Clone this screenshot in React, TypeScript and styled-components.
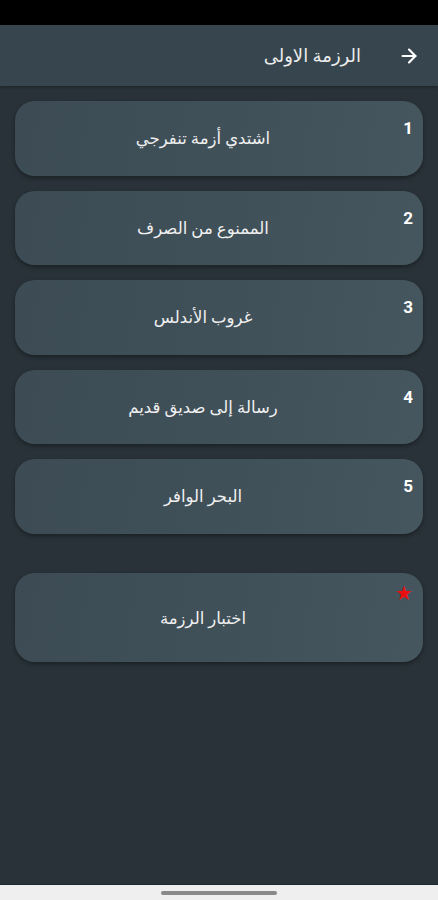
import React from 'react';
import styled, { createGlobalStyle } from 'styled-components';
import { ArrowRight } from 'lucide-react';

const GlobalStyle = createGlobalStyle`
    html, body {
        margin: 0;
        padding: 0;
        background: #283238;
    }
    * {
        box-sizing: border-box;
    }
`;

const Screen = styled.div`
    width: 438px;
    height: 900px;
    display: flex;
    flex-direction: column;
    direction: rtl;
    background: #283238;
    font-family: Roboto, 'DejaVu Sans', sans-serif;
    color: #f2f2f2;
`;

const StatusBar = styled.div`
    height: 25px;
    background: #000;
    flex-shrink: 0;
`;

const Header = styled.div`
    height: 61px;
    background: #37464e;
    display: flex;
    align-items: center;
    gap: 37px;
    padding: 0 18px;
    box-shadow: 0 1px 3px rgba(0, 0, 0, 0.3);
    flex-shrink: 0;
`;

const BackIcon = styled(ArrowRight)`
    color: #fff;
`;

const Title = styled.div`
    font-size: 18px;
    color: #ececec;
`;

const List = styled.div`
    flex: 1;
    display: flex;
    flex-direction: column;
    gap: 15px;
    padding: 15px 15px 0;
`;

const Card = styled.div<{ tall?: boolean }>`
    height: ${({ tall }) => (tall ? '89px' : '74.5px')};
    flex-shrink: 0;
    border-radius: 20px;
    background: linear-gradient(100deg, #3c4b54 0%, #3f4f58 40%, #46565e 100%);
    box-shadow: 0 2px 4px rgba(0, 0, 0, 0.35);
    display: flex;
    align-items: flex-start;
    padding: 17px 10px 0 0;
`;

const Number = styled.div`
    width: 30px;
    font-size: 17px;
    font-weight: bold;
    color: #fff;
    text-align: right;
`;

const Star = styled.div`
    width: 30px;
    margin-top: -9px;
    font-size: 20px;
    color: #e81010;
    text-align: right;
`;

const Label = styled.div<{ tall?: boolean }>`
    flex: 1;
    text-align: center;
    font-size: 16.5px;
    font-weight: 500;
    color: #f0f0f0;
    padding-left: 8px;
    margin-top: ${({ tall }) => (tall ? '19px' : '11px')};
`;

const Spacer = styled.div`
    height: 9px;
    flex-shrink: 0;
`;

const NavBar = styled.div`
    height: 16px;
    background: #efefef;
    display: flex;
    justify-content: center;
    align-items: center;
    flex-shrink: 0;
    border-top: 1px solid #1e2a2e;
`;

const Handle = styled.div`
    width: 116px;
    height: 4px;
    border-radius: 2px;
    background: #8a8a8a;
`;

const items = ['اشتدي أزمة تنفرجي', 'الممنوع من الصرف', 'غروب الأندلس', 'رسالة إلى صديق قديم', 'البحر الوافر'];

export default function App() {
    return (
        <>
            <GlobalStyle />
            <Screen>
                <StatusBar />
                <Header>
                    <BackIcon size={22} strokeWidth={2.4} />
                    <Title>الرزمة الاولى</Title>
                </Header>
                <List>
                    {items.map((item, i) => (
                        <Card key={item}>
                            <Number>{i + 1}</Number>
                            <Label>{item}</Label>
                        </Card>
                    ))}
                    <Spacer />
                    <Card tall>
                        <Star>★</Star>
                        <Label tall>اختبار الرزمة</Label>
                    </Card>
                </List>
                <NavBar>
                    <Handle />
                </NavBar>
            </Screen>
        </>
    );
}
